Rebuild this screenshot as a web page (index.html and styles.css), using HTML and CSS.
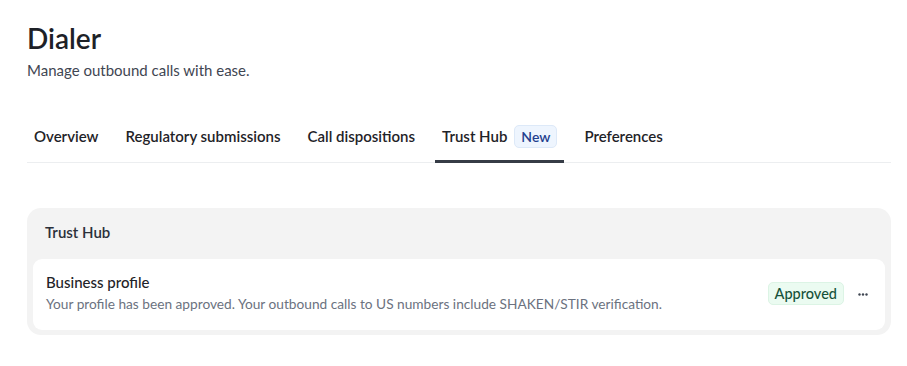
FILE: index.html
```html
<!DOCTYPE html>
<html lang="en">
<head>
    <meta charset="UTF-8">
    <meta name="viewport" content="width=device-width, initial-scale=1.0">
    <title>Dialer</title>
    <link rel="stylesheet" href="styles.css">
</head>
<body>

<div class="page">
    <div class="page-header">
        <h1 class="page-title">Dialer</h1>
        <p class="page-subtitle">Manage outbound calls with ease.</p>
    </div>

    <div class="tabs">
        <a class="tab">Overview</a>
        <a class="tab">Regulatory submissions</a>
        <a class="tab">Call dispositions</a>
        <a class="tab active">Trust Hub <span class="badge-new">New</span></a>
        <a class="tab">Preferences</a>
    </div>

    <div class="panel">
        <div class="panel-title">Trust Hub</div>
        <div class="panel-item">
            <div class="item-text">
                <div class="item-name">Business profile</div>
                <div class="item-desc">Your profile has been approved. Your outbound calls to US numbers include SHAKEN/STIR verification.</div>
            </div>
            <div class="item-actions">
                <span class="badge-status">Approved</span>
                <button class="more-btn" aria-label="More">
                    <svg width="10" height="3" viewBox="0 0 10 3"><circle cx="1.5" cy="1.5" r="1.2"/><circle cx="5" cy="1.5" r="1.2"/><circle cx="8.5" cy="1.5" r="1.2"/></svg>
                </button>
            </div>
        </div>
    </div>
</div>

</body>
</html>
```

FILE: styles.css
```css
body {
    font-family: 'Lato', 'Liberation Sans', sans-serif;
    background-color: #fff;
    color: #1f2328;
    margin: 0;
    padding: 0;
}

.page {
    padding: 19px 16px 0 27px;
}

.page-title {
    font-size: 28px;
    font-weight: 600;
    line-height: 38px;
    margin: 0;
    color: #1d2127;
}

.page-subtitle {
    font-size: 15px;
    line-height: 20px;
    margin: 3px 0 0;
    color: #3f4652;
}

.tabs {
    display: flex;
    gap: 13px;
    margin-top: 35px;
    border-bottom: 1px solid #eceef0;
}

.tab {
    display: flex;
    align-items: center;
    gap: 7px;
    height: 48px;
    padding: 0 7px 3px;
    font-size: 15px;
    font-weight: 600;
    color: #1f2328;
    border-bottom: 3px solid transparent;
    margin-bottom: -1px;
    box-sizing: border-box;
    cursor: pointer;
}

.tab.active {
    border-bottom-color: #363c46;
}

.badge-new {
    display: inline-block;
    padding: 2px 6px;
    font-size: 14px;
    font-weight: 600;
    line-height: 17px;
    color: #24408e;
    background-color: #eef5fe;
    border: 1px solid #dde9f8;
    border-radius: 5px;
}

.panel {
    margin-top: 45px;
    background-color: #f3f3f3;
    border-radius: 14px;
    padding: 0 6px 5px;
}

.panel-title {
    font-size: 15px;
    font-weight: 600;
    line-height: 20px;
    padding: 14px 12px 17px;
    color: #2a303a;
}

.panel-item {
    display: flex;
    align-items: center;
    justify-content: space-between;
    background-color: #fff;
    border-radius: 9px;
    padding: 13px 13px 16px;
}

.item-name {
    font-size: 15px;
    font-weight: 500;
    line-height: 20px;
    color: #1f2328;
}

.item-desc {
    font-size: 13.7px;
    line-height: 20px;
    margin-top: 2px;
    color: #6b7280;
}

.item-actions {
    display: flex;
    align-items: center;
    gap: 10px;
    margin-top: 1px;
}

.badge-status {
    display: inline-block;
    padding: 2px 6px;
    font-size: 14.5px;
    font-weight: 500;
    line-height: 17px;
    color: #17523a;
    background-color: #ebfbf1;
    border: 1px solid #dcf4e5;
    border-radius: 5px;
}

.more-btn {
    border: none;
    background: none;
    padding: 4px;
    cursor: pointer;
    fill: #3f4652;
    line-height: 0;
}
```
